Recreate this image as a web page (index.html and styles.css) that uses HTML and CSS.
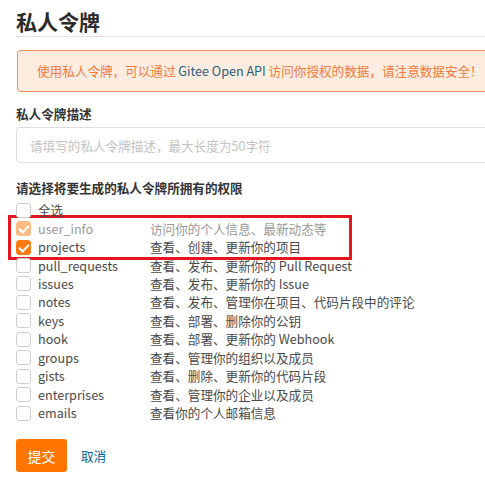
FILE: index.html
```html
<!DOCTYPE html>
<html>
<head>
    <title>私人令牌</title>
    <link rel="stylesheet" href="styles.css">
</head>
<body>
    <div class="page">
        <h1 class="title">私人令牌</h1>

        <div class="notice">
            使用私人令牌，可以通过 <span class="api">Gitee Open API</span> 访问你授权的数据，请注意数据安全！
        </div>

        <div class="field">
            <label class="field-label">私人令牌描述</label>
            <input type="text" class="input" placeholder="请填写的私人令牌描述，最大长度为50字符">
        </div>

        <div class="field">
            <div class="field-label scopes-title">请选择将要生成的私人令牌所拥有的权限</div>
            <div class="scopes">
                <div class="row"><span class="box"></span><span class="name">全选</span></div>
                <div class="highlight">
                    <div class="row disabled"><span class="box on"></span><span class="name">user_info</span><span class="desc">访问你的个人信息、最新动态等</span></div>
                    <div class="row"><span class="box on"></span><span class="name">projects</span><span class="desc">查看、创建、更新你的项目</span></div>
                </div>
                <div class="row"><span class="box"></span><span class="name">pull_requests</span><span class="desc">查看、发布、更新你的 Pull Request</span></div>
                <div class="row"><span class="box"></span><span class="name">issues</span><span class="desc">查看、发布、更新你的 Issue</span></div>
                <div class="row"><span class="box"></span><span class="name">notes</span><span class="desc">查看、发布、管理你在项目、代码片段中的评论</span></div>
                <div class="row"><span class="box"></span><span class="name">keys</span><span class="desc">查看、部署、删除你的公钥</span></div>
                <div class="row"><span class="box"></span><span class="name">hook</span><span class="desc">查看、部署、更新你的 Webhook</span></div>
                <div class="row"><span class="box"></span><span class="name">groups</span><span class="desc">查看、管理你的组织以及成员</span></div>
                <div class="row"><span class="box"></span><span class="name">gists</span><span class="desc">查看、删除、更新你的代码片段</span></div>
                <div class="row"><span class="box"></span><span class="name">enterprises</span><span class="desc">查看、管理你的企业以及成员</span></div>
                <div class="row"><span class="box"></span><span class="name">emails</span><span class="desc">查看你的个人邮箱信息</span></div>
            </div>
        </div>

        <div class="actions">
            <button class="btn">提交</button>
            <a class="cancel" href="#">取消</a>
        </div>
    </div>
</body>
</html>
```

FILE: styles.css
```css
html, body { margin: 0; padding: 0; overflow: hidden; background: #fff; }
body { font-family: "Noto Sans CJK SC", "Noto Sans", sans-serif; font-size: 12.6px; color: #333; }
.page { width: 700px; padding: 0 0 0 16px; }

.title { margin: 0; padding-top: 6px; height: 30px; line-height: 30px; font-size: 21px; font-weight: bold; color: #2b2b2b; border-bottom: 1px solid #e3e3e3; }

.notice { margin: 13px 0 0 1px; height: 40px; line-height: 40px; padding-left: 19px; background: #fdece0; border: 1px solid #f2915a; border-radius: 4px; color: #f67a3a; }
.notice .api { color: #2b5d7c; }

.field { margin-top: 12px; }
.field-label { display: block; font-weight: bold; line-height: 20px; color: #333; }
.input { display: block; box-sizing: border-box; width: 680px; height: 36px; margin-top: 3px; padding: 0 13px; border: 1px solid #dedede; border-radius: 4px; font-family: inherit; font-size: 12.6px; outline: none; }
.input::placeholder { color: #c3c3c3; }

.scopes-title { margin-top: 15px; }
.scopes { margin-top: 3px; }
.row { display: flex; align-items: center; height: 18.45px; line-height: 18px; color: #4a4a4a; }
.box { box-sizing: border-box; flex: none; width: 15px; height: 15px; border: 1px solid #cfcfcf; border-radius: 3px; background: #fff; position: relative; }
.box.on { background: #ff7a10; border-color: #ff7a10; }
.box.on::after { content: ""; position: absolute; left: 4px; top: 1px; width: 4px; height: 8px; border: solid #fff; border-width: 0 2.5px 2.5px 0; transform: rotate(45deg); }
.name { width: 112px; margin-left: 7px; }
.row.disabled .box { opacity: 0.5; }
.row.disabled .name, .row.disabled .desc { color: #999; }

.highlight { width: 333px; margin: -4px 0 -4px -8px; padding: 1px 0 1px 5px; border: 3px solid #e5161f; }

.actions { display: flex; align-items: center; margin-top: 17px; }
.btn { width: 51px; height: 33px; border: none; border-radius: 3px; background: #ff7500; color: #fff; font-family: inherit; font-size: 14px; cursor: pointer; }
.cancel { margin-left: 14px; color: #005f8f; text-decoration: none; }
```
